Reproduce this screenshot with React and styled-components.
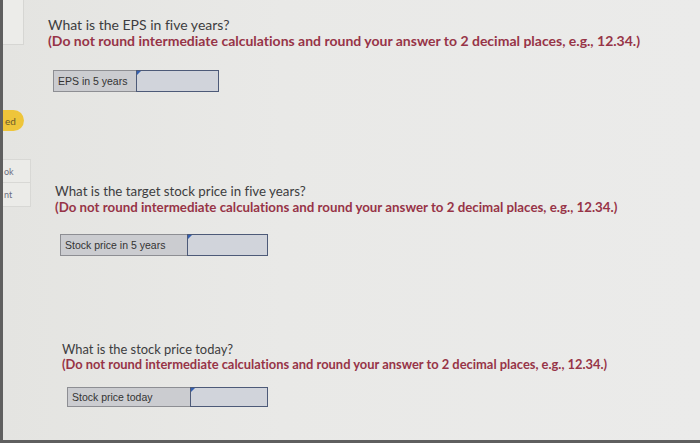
import React from "react"
import styled, { createGlobalStyle } from "styled-components"

const GlobalStyle = createGlobalStyle`
  html, body {
    margin: 0;
    padding: 0;
    background: #5f5f5f;
  }
  body {
    width: 700px;
    height: 443px;
    overflow: hidden;
  }
`

const questions = [
  {
    prompt: "What is the EPS in five years?",
    label: "EPS in 5 years",
    indent: 48,
    top: 17,
    size: 14,
    lead: 16,
    labelWidth: 83,
    inputWidth: 83,
    boxHeight: 22,
    gap: 21,
  },
  {
    prompt: "What is the target stock price in five years?",
    label: "Stock price in 5 years",
    indent: 55,
    top: 91,
    size: 13.3,
    lead: 16,
    labelWidth: 127,
    inputWidth: 81,
    boxHeight: 22,
    gap: 19,
  },
  {
    prompt: "What is the stock price today?",
    label: "Stock price today",
    indent: 62,
    top: 86,
    size: 12.9,
    lead: 15,
    labelWidth: 123,
    inputWidth: 78,
    boxHeight: 20,
    gap: 15,
  },
]

const App = () => {
  return (
    <>
      <GlobalStyle />
      <Screen>
        <Sidebar>
          <TopTab />
          <Pill>ed</Pill>
          <SideButtons>
            <SideButton>ok</SideButton>
            <SideButton>nt</SideButton>
          </SideButtons>
        </Sidebar>
        <Main>
          {questions.map(q => (
            <Question
              key={q.label}
              indent={q.indent}
              top={q.top}
              size={q.size}
              lead={q.lead}
            >
              <Prompt>{q.prompt}</Prompt>
              <Hint>
                (Do not round intermediate calculations and round your answer
                to 2 decimal places, e.g., 12.34.)
              </Hint>
              <AnswerRow gap={q.gap} height={q.boxHeight}>
                <AnswerLabel width={q.labelWidth}>{q.label}</AnswerLabel>
                <AnswerInput width={q.inputWidth}>
                  <Caret />
                </AnswerInput>
              </AnswerRow>
            </Question>
          ))}
        </Main>
      </Screen>
    </>
  )
}

export default App

// LAYOUT
const Screen = styled.div`
  margin-left: 3px;
  height: 440px;
  display: flex;
  background: linear-gradient(90deg, #e4e4e1 0%, #e9e9e7 40%, #ebebea 100%);
  font-family: Lato, "Open Sans", sans-serif;
  font-variant-ligatures: none;
  overflow: hidden;
`

// SIDEBAR
const Sidebar = styled.div`
  width: 28px;
  flex-shrink: 0;
  display: flex;
  flex-direction: column;
  align-items: flex-start;
  font-size: 9px;
  color: #6a6e80;
`

const TopTab = styled.div`
  width: 21px;
  height: 45px;
  background: #ecece9;
  border-right: 1px solid #d6d6d3;
  border-bottom: 1px solid #d6d6d3;
  box-sizing: border-box;
`

const Pill = styled.div`
  margin-top: 65px;
  width: 21px;
  height: 21px;
  border-radius: 0 11px 11px 0;
  background: #eec53a;
  color: #6b5a2a;
  font-size: 10px;
  display: flex;
  align-items: center;
  padding-left: 2px;
  box-sizing: border-box;
`

const SideButtons = styled.div`
  margin-top: 28px;
  display: flex;
  flex-direction: column;
`

const SideButton = styled.div`
  width: 28px;
  height: 24px;
  background: #ebebe8;
  border: 1px solid #d8d8d5;
  border-left: none;
  box-sizing: border-box;
  display: flex;
  align-items: center;
  padding-left: 1px;
  & + & {
    border-top: none;
  }
`

// QUESTIONS
const Main = styled.div`
  flex: 1;
  display: flex;
  flex-direction: column;
`

const Question = styled.section`
  margin-top: ${p => p.top}px;
  padding-left: ${p => p.indent - 31}px;
  font-size: ${p => p.size}px;
  line-height: ${p => p.lead}px;
`

const Prompt = styled.div`
  color: #3d3d40;
`

const Hint = styled.div`
  color: #973447;
  font-weight: 700;
`

const AnswerRow = styled.div`
  display: flex;
  margin-top: ${p => p.gap}px;
  margin-left: 5px;
  height: ${p => p.height}px;
`

const AnswerLabel = styled.div`
  width: ${p => p.width}px;
  box-sizing: border-box;
  background: #cbccd0;
  border: 1px solid #8d8e93;
  border-right: none;
  font-family: "Liberation Sans", Arial, sans-serif;
  font-size: 10.5px;
  color: #333;
  display: flex;
  align-items: center;
  padding-left: 4px;
`

const AnswerInput = styled.div`
  position: relative;
  width: ${p => p.width}px;
  box-sizing: border-box;
  background: #d1d4db;
  border: 1.5px solid #4d5a78;
`

const Caret = styled.span`
  position: absolute;
  left: 0;
  top: 0;
  width: 0;
  height: 0;
  border-top: 4px solid #3560b0;
  border-right: 4px solid transparent;
`
